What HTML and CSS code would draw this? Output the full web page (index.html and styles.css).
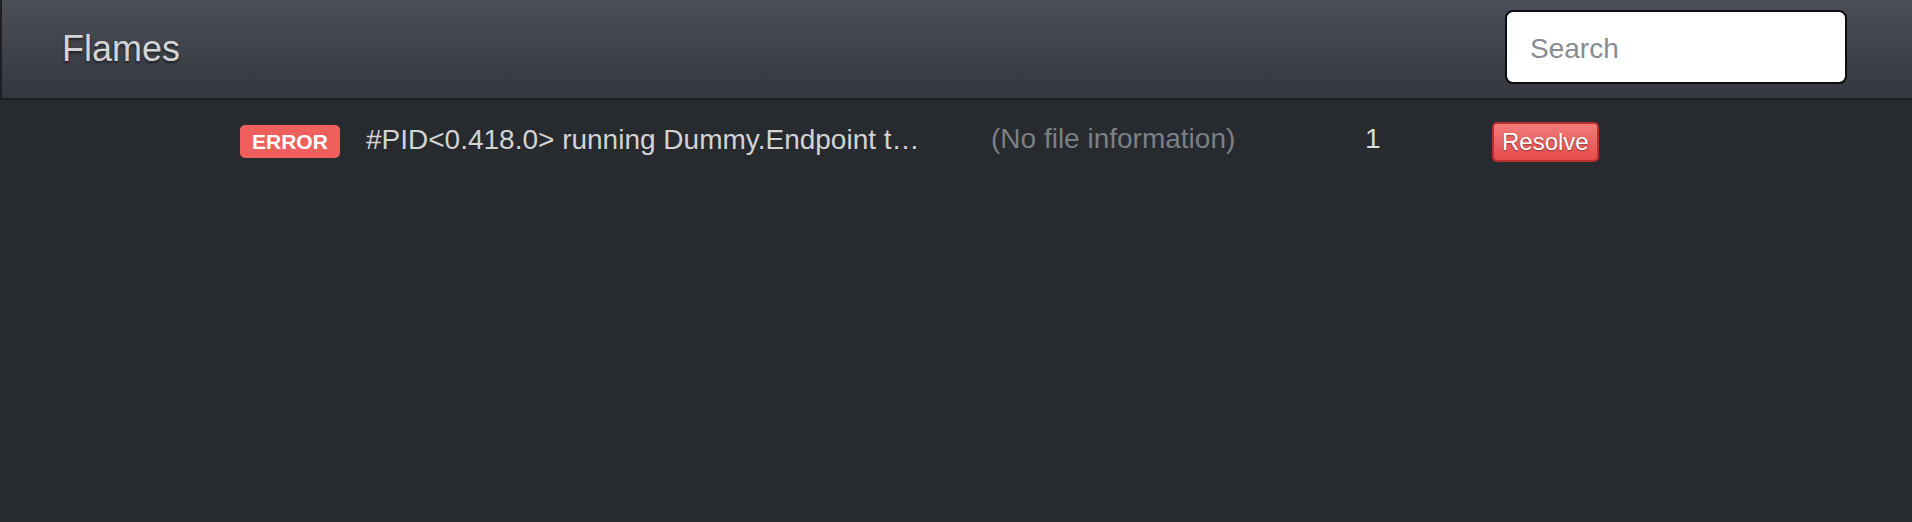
FILE: index.html
```html
<!DOCTYPE html>
<html>
<head>
<meta charset="utf-8">
<link rel="stylesheet" href="styles.css">
</head>
<body>
<header class="navbar">
  <div class="brand">Flames</div>
  <input class="search" type="text" placeholder="Search">
</header>
<main class="list">
  <div class="row">
    <div class="cell"><span class="label">ERROR</span></div>
    <div class="cell"><span class="message" title="#PID&lt;0.418.0&gt; running Dummy.Endpoint terminated">#PID&lt;0.418.0&gt; running Dummy.Endpoint terminated</span></div>
    <div class="cell file">(No file information)</div>
    <div class="cell count">1</div>
    <div class="cell"><button class="resolve">Resolve</button></div>
  </div>
</main>
</body>
</html>
```
FILE: styles.css
```css
html, body {
  margin: 0;
  padding: 0;
}
body {
  background: #272a2f;
  font-family: "Liberation Sans", Arial, Helvetica, sans-serif;
  width: 1912px;
  height: 522px;
  overflow: hidden;
}
.navbar {
  box-sizing: border-box;
  height: 100px;
  display: flex;
  align-items: center;
  justify-content: space-between;
  padding: 0 65px 2px 60px;
  background: linear-gradient(to bottom, #4b4f58 0%, #34373d 100%);
  border-left: 2px solid #1d1f23;
  border-bottom: 2px solid #1d1f23;
}
.brand {
  font-size: 36px;
  color: #d4d4d6;
  text-shadow: 0 2px 3px rgba(0, 0, 0, 0.55);
  margin-top: 1px;
}
.search {
  box-sizing: border-box;
  width: 342px;
  height: 74px;
  margin-top: -3px;
  border: 2px solid #0d0e10;
  border-radius: 8px;
  background: #fff;
  padding: 5px 0 0 23px;
  font-family: "Liberation Sans", Arial, sans-serif;
  font-size: 28px;
  color: #555;
  outline: none;
}
.search::placeholder {
  color: #878c92;
}
.row {
  display: grid;
  grid-template-columns: 126px 625px 374px 127px auto;
  align-items: center;
  padding-left: 240px;
  height: 82px;
}
.cell {
  display: flex;
  align-items: center;
  min-width: 0;
}
.label {
  display: inline-block;
  box-sizing: border-box;
  height: 33px;
  line-height: 33px;
  padding: 0 12px;
  background: #ef5f5c;
  color: #fff;
  font-weight: bold;
  font-size: 21px;
  border-radius: 5px;
}
.message {
  display: block;
  width: 560px;
  white-space: nowrap;
  overflow: hidden;
  text-overflow: ellipsis;
  font-size: 28px;
  color: #d2d3d5;
  margin-top: -3px;
}
.file {
  font-size: 28px;
  color: #7b8086;
  white-space: nowrap;
  margin-top: -5px;
}
.count {
  font-size: 28px;
  color: #dcdcdc;
  margin-top: -5px;
}
.resolve {
  box-sizing: border-box;
  height: 40px;
  padding: 0 8px;
  margin-top: 1px;
  border: 2px solid #b8302c;
  border-radius: 5px;
  background: linear-gradient(to bottom, #f27d7b 0%, #e6494a 100%);
  color: #fff;
  font-family: "Liberation Sans", Arial, sans-serif;
  font-size: 24px;
  text-shadow: 0 1px 2px rgba(0, 0, 0, 0.45);
  line-height: 36px;
  cursor: pointer;
}
```
